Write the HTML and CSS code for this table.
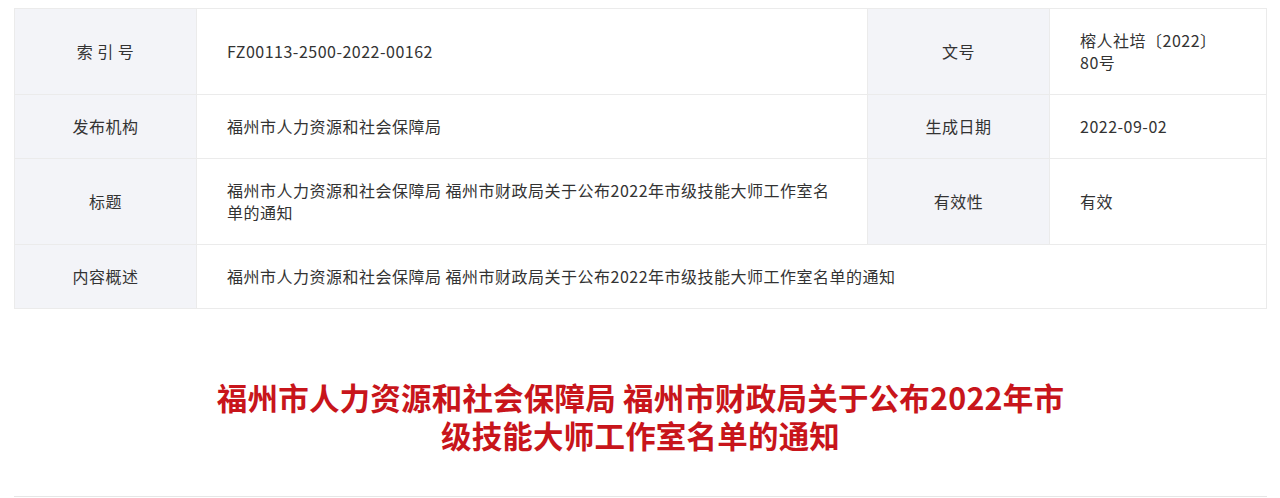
FILE: index.html
```html
<!DOCTYPE html>
<html lang="zh-CN">
<head>
    <meta charset="UTF-8">
    <meta name="viewport" content="width=device-width, initial-scale=1.0">
    <title>福州市人力资源和社会保障局 福州市财政局关于公布2022年市级技能大师工作室名单的通知</title>
    <link rel="stylesheet" href="styles.css">
</head>
<body>
    <div class="container">
        <table class="info-table">
            <colgroup>
                <col class="col-label">
                <col class="col-value">
                <col class="col-label">
                <col class="col-side">
            </colgroup>
            <tr>
                <th>索 引 号</th>
                <td>FZ00113-2500-2022-00162</td>
                <th>文号</th>
                <td class="side">榕人社培〔2022〕80号</td>
            </tr>
            <tr>
                <th>发布机构</th>
                <td>福州市人力资源和社会保障局</td>
                <th>生成日期</th>
                <td class="side">2022-09-02</td>
            </tr>
            <tr>
                <th>标题</th>
                <td>福州市人力资源和社会保障局 福州市财政局关于公布2022年市级技能大师工作室名单的通知</td>
                <th>有效性</th>
                <td class="side">有效</td>
            </tr>
            <tr>
                <th>内容概述</th>
                <td colspan="3">福州市人力资源和社会保障局 福州市财政局关于公布2022年市级技能大师工作室名单的通知</td>
            </tr>
        </table>

        <h1 class="article-title">福州市人力资源和社会保障局 福州市财政局关于公布2022年市级技能大师工作室名单的通知</h1>

        <div class="article-body"></div>
    </div>
</body>
</html>
```

FILE: styles.css
```css
body {
    margin: 0;
    padding: 8px 0 0;
    background-color: #fff;
    font-family: "Noto Sans CJK SC", "Noto Sans", sans-serif;
    color: #333;
}
.container {
    width: 1253px;
    margin: 0 auto 0 14px;
}
.info-table {
    width: 100%;
    border-collapse: collapse;
    table-layout: fixed;
    font-size: 16px;
    line-height: 22px;
    letter-spacing: 0.5px;
}
.col-label {
    width: 182px;
}
.col-value {
    width: 671px;
}
.col-side {
    width: 217px;
}
.info-table th,
.info-table td {
    border: 1px solid #ebebeb;
    padding: 20px 30px 21px;
    vertical-align: middle;
    color: #333;
}
.info-table th {
    background-color: #f3f4f8;
    font-weight: normal;
    text-align: center;
}
.info-table td {
    text-align: left;
}
.info-table td.side {
    padding-right: 40px;
}
.article-title {
    width: 866px;
    margin: 69px auto 42px;
    font-size: 30.5px;
    line-height: 38px;
    font-weight: bold;
    letter-spacing: 0.2px;
    color: #c8151b;
    text-align: center;
}
.article-body {
    border-top: 1px solid #e6e6e6;
    height: 10px;
}
```
